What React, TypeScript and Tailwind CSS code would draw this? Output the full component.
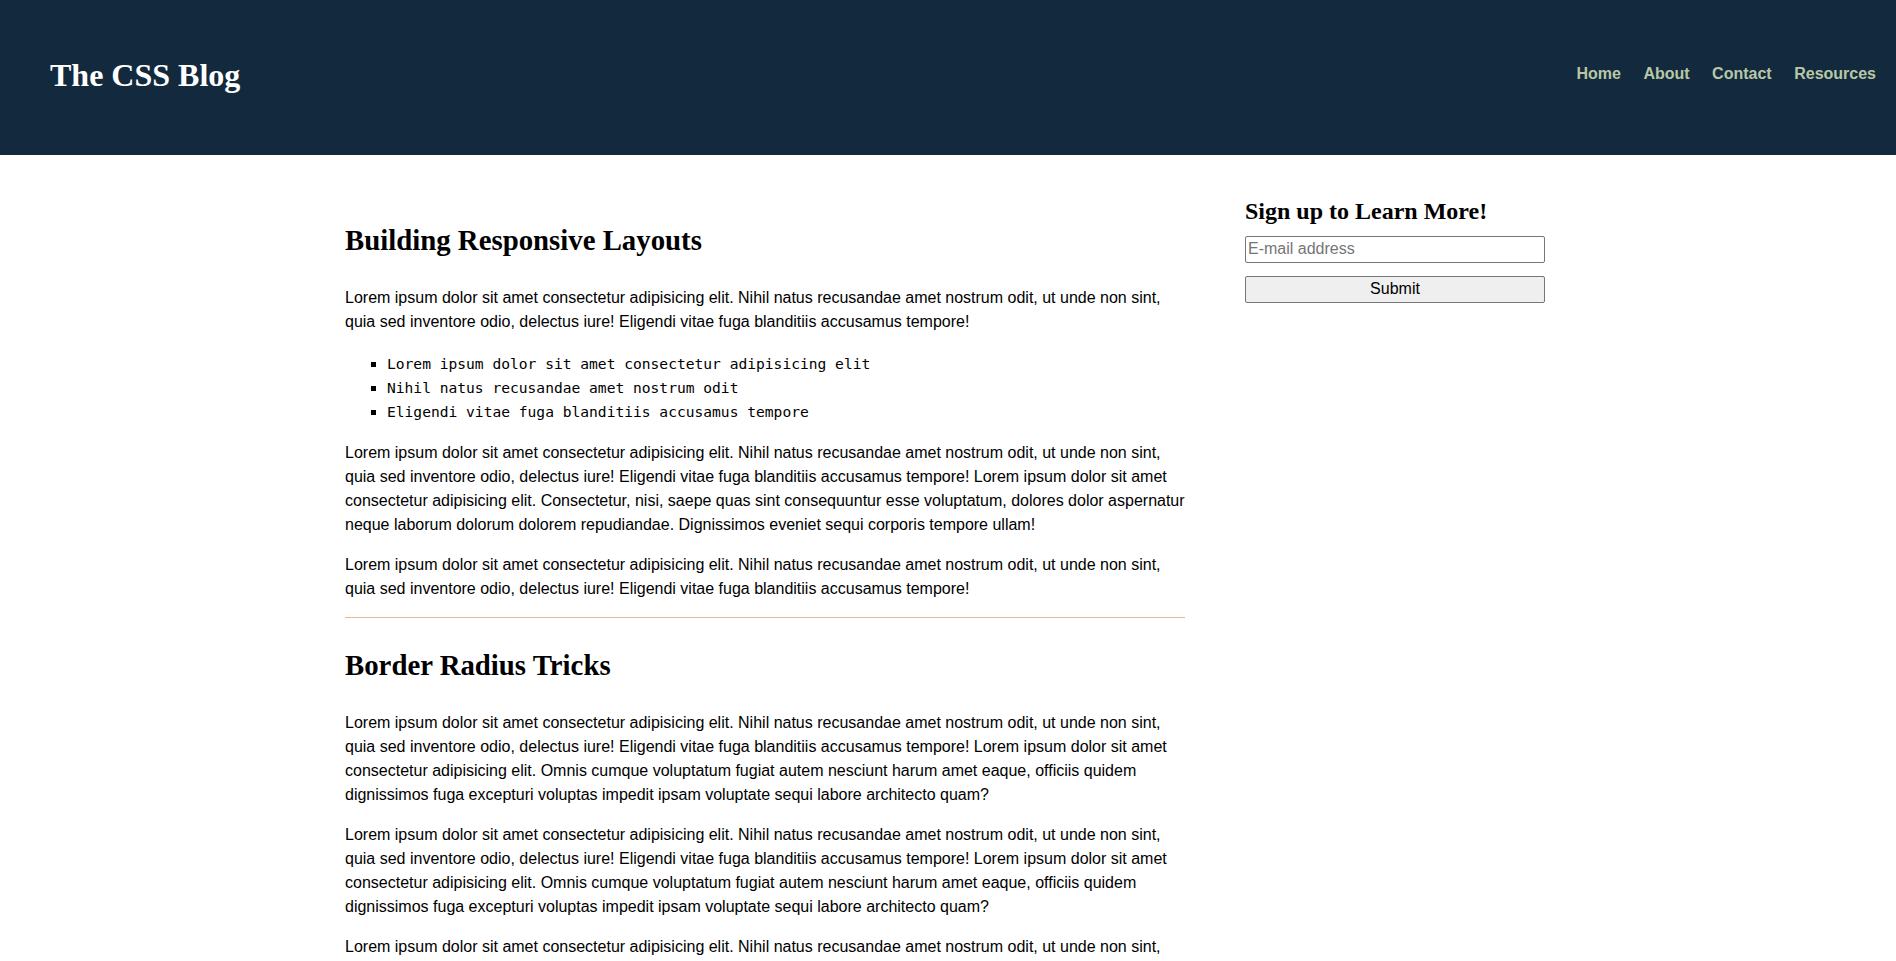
const SHORT =
  'Lorem ipsum dolor sit amet consectetur adipisicing elit. Nihil natus recusandae amet nostrum odit, ut unde non sint, quia sed inventore odio, delectus iure! Eligendi vitae fuga blanditiis accusamus tempore!';

const LONG_A =
  SHORT +
  ' Lorem ipsum dolor sit amet consectetur adipisicing elit. Consectetur, nisi, saepe quas sint consequuntur esse voluptatum, dolores dolor aspernatur neque laborum dolorum dolorem repudiandae. Dignissimos eveniet sequi corporis tempore ullam!';

const LONG_B =
  SHORT +
  ' Lorem ipsum dolor sit amet consectetur adipisicing elit. Omnis cumque voluptatum fugiat autem nesciunt harum amet eaque, officiis quidem dignissimos fuga excepturi voluptas impedit ipsam voluptate sequi labore architecto quam?';

const NAV = ['Home', 'About', 'Contact', 'Resources'];

const LIST = [
  'Lorem ipsum dolor sit amet consectetur adipisicing elit',
  'Nihil natus recusandae amet nostrum odit',
  'Eligendi vitae fuga blanditiis accusamus tempore',
];

function Para({ children }: { children: React.ReactNode }) {
  return <p className="my-4 text-[16px] leading-6 text-black">{children}</p>;
}

function PostTitle({ children }: { children: React.ReactNode }) {
  return (
    <h2 className="my-[28.8px] font-['Liberation_Serif',serif] text-[28.8px] font-bold leading-[1.149] text-black">
      {children}
    </h2>
  );
}

export default function App() {
  return (
    <div className="min-h-screen bg-white font-['Liberation_Sans',Arial,sans-serif]">
      <header className="flex h-[155px] items-center justify-between bg-[#13293d] pb-[5px] pl-[50px] pr-[20px]">
        <h1 className="font-['Liberation_Serif',serif] text-[32px] font-bold leading-[1.149] text-white">
          The CSS Blog
        </h1>
        <nav className="mb-[3px] flex gap-[22.5px]">
          {NAV.map((item) => (
            <a key={item} href="#" className="text-[16px] font-bold text-[#b8c8a6]">
              {item}
            </a>
          ))}
        </nav>
      </header>

      <div className="flex gap-[60px] pl-[345px] pt-[40px]">
        {/* Posts */}
        <main className="w-[840px] shrink-0">
          <article>
            <PostTitle>Building Responsive Layouts</PostTitle>
            <Para>{SHORT}</Para>
            <ul className="mb-[17px] mt-[18px] list-[square] pl-[42px] font-['DejaVu_Sans_Mono',monospace] text-[14.6px] leading-6 text-black">
              {LIST.map((li) => (
                <li key={li}>{li}</li>
              ))}
            </ul>
            <Para>{LONG_A}</Para>
            <Para>{SHORT}</Para>
          </article>

          <hr className="mb-[31px] mt-[16px] border-0 border-t border-[#e4b995]" />

          <article>
            <PostTitle>Border Radius Tricks</PostTitle>
            <Para>{LONG_B}</Para>
            <Para>{LONG_B}</Para>
            <Para>{LONG_B}</Para>
          </article>
        </main>

        {/* Sidebar */}
        <aside className="w-[300px] shrink-0 pt-[3px]">
          <h3 className="font-['Liberation_Serif',serif] text-[24px] font-bold leading-[1.149] text-black">
            Sign up to Learn More!
          </h3>
          <form className="mt-[10px] flex flex-col gap-[13px]" onSubmit={(e) => e.preventDefault()}>
            <input
              type="email"
              placeholder="E-mail address"
              className="h-[27px] w-full rounded-[2px] border border-[#767676] px-[2px] text-[16px] text-black placeholder:text-[#757575] outline-none"
            />
            <button
              type="submit"
              className="h-[27px] w-full rounded-[2px] border border-[#767676] bg-[#efefef] text-[16px] text-black"
            >
              Submit
            </button>
          </form>
        </aside>
      </div>
    </div>
  );
}
